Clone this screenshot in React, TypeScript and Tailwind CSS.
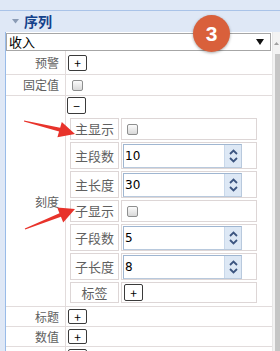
import React from "react";

const font = { fontFamily: '"Noto Sans CJK SC", "Noto Sans", sans-serif' };

function PlusBtn({ sign = "+", w = "w-[19px]", h = "h-[16px]" }: { sign?: string; w?: string; h?: string }) {
  return (
    <div
      className={`${w} ${h} flex items-center justify-center rounded-[2px] border border-[#3a3a3a] bg-white text-[12px] leading-none text-black`}
    >
      {sign}
    </div>
  );
}

function CheckBox() {
  return (
    <div className="h-[11px] w-[11px] rounded-[2px] border border-[#8e8f8f] bg-gradient-to-b from-[#fbfbfb] to-[#d9d9d9]" />
  );
}

function Spinner({ value }: { value: string }) {
  return (
    <div className="flex h-[24px] w-[119px] items-stretch border border-[#b8c9dd] border-l-[#9fb6d1] border-t-[#9fb6d1] bg-white">
      <div className="flex flex-1 items-center pl-[1px] text-[12px] text-black" style={{ fontFamily: '"DejaVu Sans", sans-serif' }}>
        {value}
      </div>
      <div className="flex w-[17px] flex-col items-center justify-center gap-[2px] border-l border-[#c9d8ea] bg-[#dde8f5]">
        <svg width="9" height="6" viewBox="0 0 9 6">
          <path d="M1 5 L4.5 1.5 L8 5" stroke="#3c5580" strokeWidth="1.8" fill="none" />
        </svg>
        <svg width="9" height="6" viewBox="0 0 9 6">
          <path d="M1 1 L4.5 4.5 L8 1" stroke="#3c5580" strokeWidth="1.8" fill="none" />
        </svg>
      </div>
    </div>
  );
}

function SubRow({ label, h, children }: { label: string; h: string; children: React.ReactNode }) {
  return (
    <div className={`flex gap-[2px] ${h}`}>
      <div className="flex w-[49px] items-center justify-center border border-[#ddd6d6] text-[13px] text-[#606060]">
        {label}
      </div>
      <div className="flex w-[136px] items-center border border-[#ddd6d6] px-[1px]">{children}</div>
    </div>
  );
}

function Row({ label, h, children }: { label: string; h: string; children: React.ReactNode }) {
  return (
    <div className={`flex border-b border-[#e2dcdc] ${h}`}>
      <div className="flex w-[60px] shrink-0 items-center justify-end border-r border-[#e2dcdc] pr-[6px] text-[12px] text-[#606060]">
        {label}
      </div>
      <div className="flex flex-1 items-center pl-[2px]">{children}</div>
    </div>
  );
}

export default function App() {
  return (
    <div className="relative flex h-[351px] w-[280px] flex-col overflow-hidden bg-white" style={font}>
      <div className="h-[11px] shrink-0 border-b border-[#a9c3e8] bg-[#dfe8f6]" />
      <div className="flex h-[21px] shrink-0 items-center bg-[#dfe8f6] pl-[12px]">
        <svg width="7" height="5" viewBox="0 0 7 5">
          <path d="M0 0 L7 0 L3.5 4.5 Z" fill="#8a9bb5" />
        </svg>
        <span className="ml-[5px] text-[14px] font-bold text-[#15428b]">序列</span>
      </div>
      <div className="flex flex-1">
        <div className="w-[6px] shrink-0 border-r border-[#99bbe8] bg-[#dfe8f6]" />
        <div className="flex flex-1 flex-col">
          <div className="mt-[1px] mr-[1px] flex h-[18px] items-center justify-between border border-[#a6a6a6] pl-[2px] pr-[6px]">
            <span className="text-[13px] text-black">收入</span>
            <svg width="8" height="6" viewBox="0 0 8 6">
              <path d="M0 0 L8 0 L4 6 Z" fill="#111" />
            </svg>
          </div>
          <Row label="预警" h="h-[24px]">
            <PlusBtn />
          </Row>
          <Row label="固定值" h="h-[21px]">
            <div className="ml-[4px]">
              <CheckBox />
            </div>
          </Row>
          <div className="flex h-[211px] border-b border-[#e2dcdc]">
            <div className="flex w-[60px] shrink-0 items-center justify-end border-r border-[#e2dcdc] pb-[2px] pr-[6px] pt-[4px] text-[12px] text-[#606060]">
              刻度
            </div>
            <div className="flex flex-1 flex-col pl-[1px] pt-[1px]">
              <PlusBtn sign="−" h="h-[17px]" />
              <div className="ml-[3px] mt-[4px] flex flex-col gap-[2px]">
                <SubRow label="主显示" h="h-[22px]">
                  <div className="ml-[4px]">
                    <CheckBox />
                  </div>
                </SubRow>
                <SubRow label="主段数" h="h-[27px]">
                  <Spinner value="10" />
                </SubRow>
                <SubRow label="主长度" h="h-[27px]">
                  <Spinner value="30" />
                </SubRow>
                <SubRow label="子显示" h="h-[22px]">
                  <div className="ml-[4px]">
                    <CheckBox />
                  </div>
                </SubRow>
                <SubRow label="子段数" h="h-[27px]">
                  <Spinner value="5" />
                </SubRow>
                <SubRow label="子长度" h="h-[27px]">
                  <Spinner value="8" />
                </SubRow>
                <SubRow label="标签" h="h-[21px]">
                  <div className="ml-[1px]">
                    <PlusBtn h="h-[17px]" />
                  </div>
                </SubRow>
              </div>
            </div>
          </div>
          <Row label="标题" h="h-[20px]">
            <PlusBtn h="h-[15px]" />
          </Row>
          <Row label="数值" h="h-[20px]">
            <PlusBtn h="h-[15px]" />
          </Row>
          <div className="flex h-[20px]">
            <div className="w-[60px] shrink-0 border-r border-[#e2dcdc]" />
            <div className="pl-[2px] pt-[2px]">
              <div className="h-[15px] w-[19px] rounded-[2px] border border-[#3a3a3a] bg-white" />
            </div>
          </div>
        </div>
        <div className="flex w-[8px] shrink-0 flex-col border-l border-[#e8e8e8] bg-[#f3f3f3]">
          <div className="flex h-[22px] items-center justify-center">
            <svg width="5" height="3" viewBox="0 0 5 3">
              <path d="M0 3 L2.5 0 L5 3 Z" fill="#a0a0a0" />
            </svg>
          </div>
          <div className="ml-[2px] flex-1 bg-[#c6c6c6]" />
        </div>
      </div>

      {/* annotations */}
      <div className="absolute left-[193px] top-[15px] flex h-[37px] w-[37px] items-center justify-center rounded-full bg-[#d9603b] shadow-[0_1px_3px_rgba(0,0,0,0.35)]">
        <span className="text-[21px] font-bold leading-none text-white" style={{ fontFamily: '"Liberation Sans", sans-serif' }}>
          3
        </span>
      </div>
      <svg className="absolute left-0 top-0" width="280" height="351" viewBox="0 0 280 351">
        <polygon
          points="24.1,120.5 60.15,127.7 61.8,121.9 75,134 57.4,137.3 59.05,131.5 23.9,121.5"
          fill="#e8332b"
        />
        <polygon
          points="24.8,228.5 59.45,213.15 57.2,207.6 75,209 63.2,222.4 60.95,216.85 25.2,229.5"
          fill="#e8332b"
        />
      </svg>
    </div>
  );
}
